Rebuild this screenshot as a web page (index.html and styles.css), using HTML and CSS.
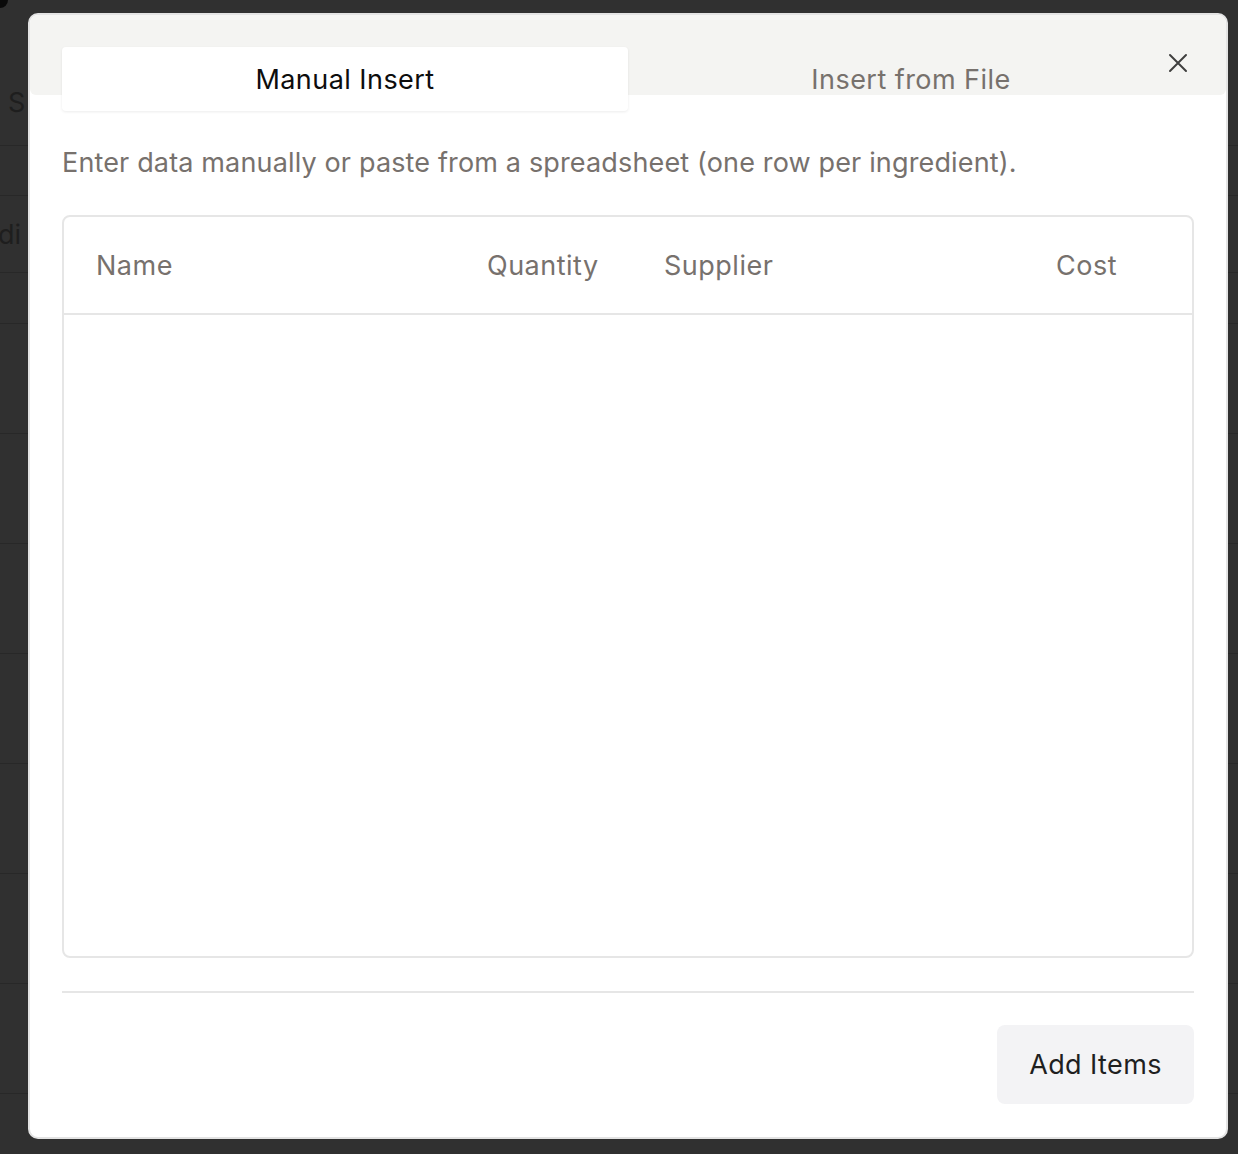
FILE: index.html
```html
<!DOCTYPE html>
<html lang="en">
<head>
<meta charset="utf-8">
<title>Insert Items</title>
<link rel="stylesheet" href="styles.css">
</head>
<body>
<div class="backdrop-page">
  <span class="dot"></span>
  <div class="bg-row bg-row-a"><span class="bg-text">S</span></div>
  <div class="bg-row bg-row-b"></div>
  <div class="bg-row bg-row-c"><span class="bg-text">di</span></div>
  <div class="bg-row bg-row-d"></div>
  <div class="bg-row"></div>
  <div class="bg-row"></div>
  <div class="bg-row"></div>
  <div class="bg-row"></div>
  <div class="bg-row"></div>
  <div class="bg-row"></div>
  <div class="bg-row"></div>
</div>

<div class="modal" role="dialog">
  <div class="modal-band"></div>
  <button class="close-btn" aria-label="Close">
    <svg width="20" height="20" viewBox="0 0 20 20"><path d="M2 2 L18 18 M18 2 L2 18" stroke="#3f3f3f" stroke-width="2" stroke-linecap="round" fill="none"/></svg>
  </button>
  <div class="tabs">
    <div class="tab tab-active">Manual Insert</div>
    <div class="tab">Insert from File</div>
  </div>
  <p class="desc">Enter data manually or paste from a spreadsheet (one row per ingredient).</p>
  <div class="grid-box">
    <div class="grid-head">
      <div class="col">Name</div>
      <div class="col">Quantity</div>
      <div class="col">Supplier</div>
      <div class="col">Cost</div>
    </div>
    <div class="grid-body"></div>
  </div>
  <div class="divider"></div>
  <div class="footer">
    <button class="add-btn">Add Items</button>
  </div>
</div>
</body>
</html>
```

FILE: styles.css
```css
* { box-sizing: border-box; }
html, body {
  margin: 0;
  padding: 0;
  width: 1238px;
  height: 1154px;
  overflow: hidden;
  background: #303030;
  font-family: Inter, "Noto Sans", "Liberation Sans", sans-serif;
}

.backdrop-page {
  position: relative;
}
.dot {
  position: absolute;
  left: -8px;
  top: -8px;
  width: 16px;
  height: 16px;
  border-radius: 50%;
  background: #0a0a0a;
}
.bg-row {
  height: 110px;
  border-bottom: 1px solid #282828;
  display: flex;
  align-items: center;
}
.bg-row-a { height: 146px; align-items: flex-start; padding-top: 86px; }
.bg-row-b { height: 50px; }
.bg-row-c { height: 77px; }
.bg-row-d { height: 51px; }
.bg-text {
  color: #1e1e1e;
  font-size: 27px;
  padding-left: 8px;
}
.bg-row-c .bg-text { padding-left: 0; margin-left: -2px; }

.modal {
  position: absolute;
  left: 28px;
  top: 13px;
  width: 1200px;
  height: 1126px;
  background: #ffffff;
  border: 2px solid #e3e3e3;
  border-radius: 10px;
  padding: 32px 32px 33px 32px;
  display: flex;
  flex-direction: column;
  overflow: hidden;
}
.modal-band {
  position: absolute;
  left: 0;
  top: 0;
  right: 0;
  height: 80px;
  background: #f4f4f2;
  border-radius: 8px 8px 6px 6px;
}
.close-btn {
  position: absolute;
  right: 38px;
  top: 38px;
  width: 20px;
  height: 20px;
  padding: 0;
  border: 0;
  background: transparent;
  display: flex;
  align-items: center;
  justify-content: center;
}

.tabs {
  position: relative;
  display: grid;
  grid-template-columns: 1fr 1fr;
  height: 64px;
}
.tab {
  display: flex;
  align-items: center;
  justify-content: center;
  font-size: 27px;
  letter-spacing: 0.45px;
  color: #77716d;
}
.tab-active {
  background: #ffffff;
  color: #0d0d0d;
  border-radius: 4px;
  box-shadow: 0 1px 3px rgba(0, 0, 0, 0.08);
}

.desc {
  margin: 34px 0 0 0;
  height: 36px;
  line-height: 36px;
  font-size: 27px;
  letter-spacing: 0.15px;
  color: #77716d;
}

.grid-box {
  margin-top: 34px;
  height: 743px;
  border: 2px solid #e6e6e6;
  border-radius: 8px;
  display: flex;
  flex-direction: column;
}
.grid-head {
  display: grid;
  grid-template-columns: 391px 177px 392px 1fr;
  height: 98px;
  border-bottom: 2px solid #e6e6e6;
  align-items: center;
}
.col {
  padding-left: 32px;
  font-size: 27px;
  letter-spacing: 0.5px;
  color: #77716d;
}
.grid-body { flex: 1; }

.divider {
  margin-top: 33px;
  height: 2px;
  background: #e6e6e6;
}
.footer {
  margin-top: 32px;
  display: flex;
  justify-content: flex-end;
}
.add-btn {
  width: 197px;
  height: 79px;
  border: 0;
  border-radius: 8px;
  background: #f3f3f5;
  color: #1f1f1f;
  font-family: Inter, "Noto Sans", "Liberation Sans", sans-serif;
  font-size: 27px;
  letter-spacing: 0.4px;
  padding: 0;
}
```
